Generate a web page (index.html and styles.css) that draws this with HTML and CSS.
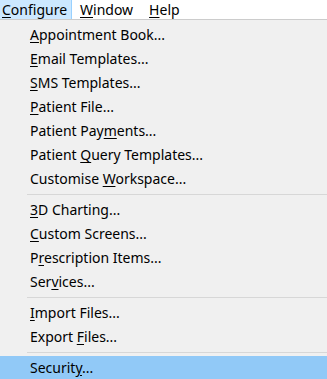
FILE: index.html
```html
<!DOCTYPE html>
<html lang="en">
<head>
    <meta charset="UTF-8">
    <meta name="viewport" content="width=device-width, initial-scale=1.0">
    <title>Configure menu</title>
    <link rel="stylesheet" href="styles.css">
</head>
<body>
    <div class="menubar">
        <div class="menubar-item abierto"><u>C</u>onfigure</div>
        <div class="menubar-item"><u>W</u>indow</div>
        <div class="menubar-item"><u>H</u>elp</div>
    </div>

    <div class="menu">
        <div class="menu-item"><u>A</u>ppointment Book...</div>
        <div class="menu-item"><u>E</u>mail Templates...</div>
        <div class="menu-item"><u>S</u>MS Templates...</div>
        <div class="menu-item"><u>P</u>atient File...</div>
        <div class="menu-item">Patient Pay<u>m</u>ents...</div>
        <div class="menu-item">Patient <u>Q</u>uery Templates...</div>
        <div class="menu-item">Customise <u>W</u>orkspace...</div>
        <div class="separador"></div>
        <div class="menu-item"><u>3</u>D Charting...</div>
        <div class="menu-item"><u>C</u>ustom Screens...</div>
        <div class="menu-item">P<u>r</u>escription Items...</div>
        <div class="menu-item">Ser<u>v</u>ices...</div>
        <div class="separador"></div>
        <div class="menu-item"><u>I</u>mport Files...</div>
        <div class="menu-item">Export <u>F</u>iles...</div>
        <div class="separador"></div>
        <div class="menu-item activo">Securit<u>y</u>...</div>
    </div>
</body>
</html>
```

FILE: styles.css
```css
body {
    margin: 0;
    font-family: "Noto Sans", "Open Sans", sans-serif;
    font-size: 14px;
    color: #000;
    background-color: #fff;
    height: 379px;
    overflow: hidden;
}

u {
    text-decoration-thickness: 1px;
    text-underline-offset: 2px;
}

.menubar {
    display: flex;
    height: 19px;
    line-height: 19px;
    background-color: #fff;
}

.menubar-item {
    padding: 0 8px;
    box-sizing: border-box;
}

.abierto {
    width: 72px;
    padding-left: 2px;
    background-color: #cce8ff;
    border-right: 1px solid #99d1ff;
}

.menu {
    border-top: 1px solid #cccccc;
    background-color: #f0f0f0;
    padding-top: 3px;
    height: 360px;
}

.menu-item {
    height: 24px;
    line-height: 24px;
    padding-left: 30px;
}

.menu-item.activo {
    background-color: #91c9f7;
}

.separador {
    height: 1px;
    margin: 3px 0 3px 27px;
    background-color: #d7d7d7;
}
```
